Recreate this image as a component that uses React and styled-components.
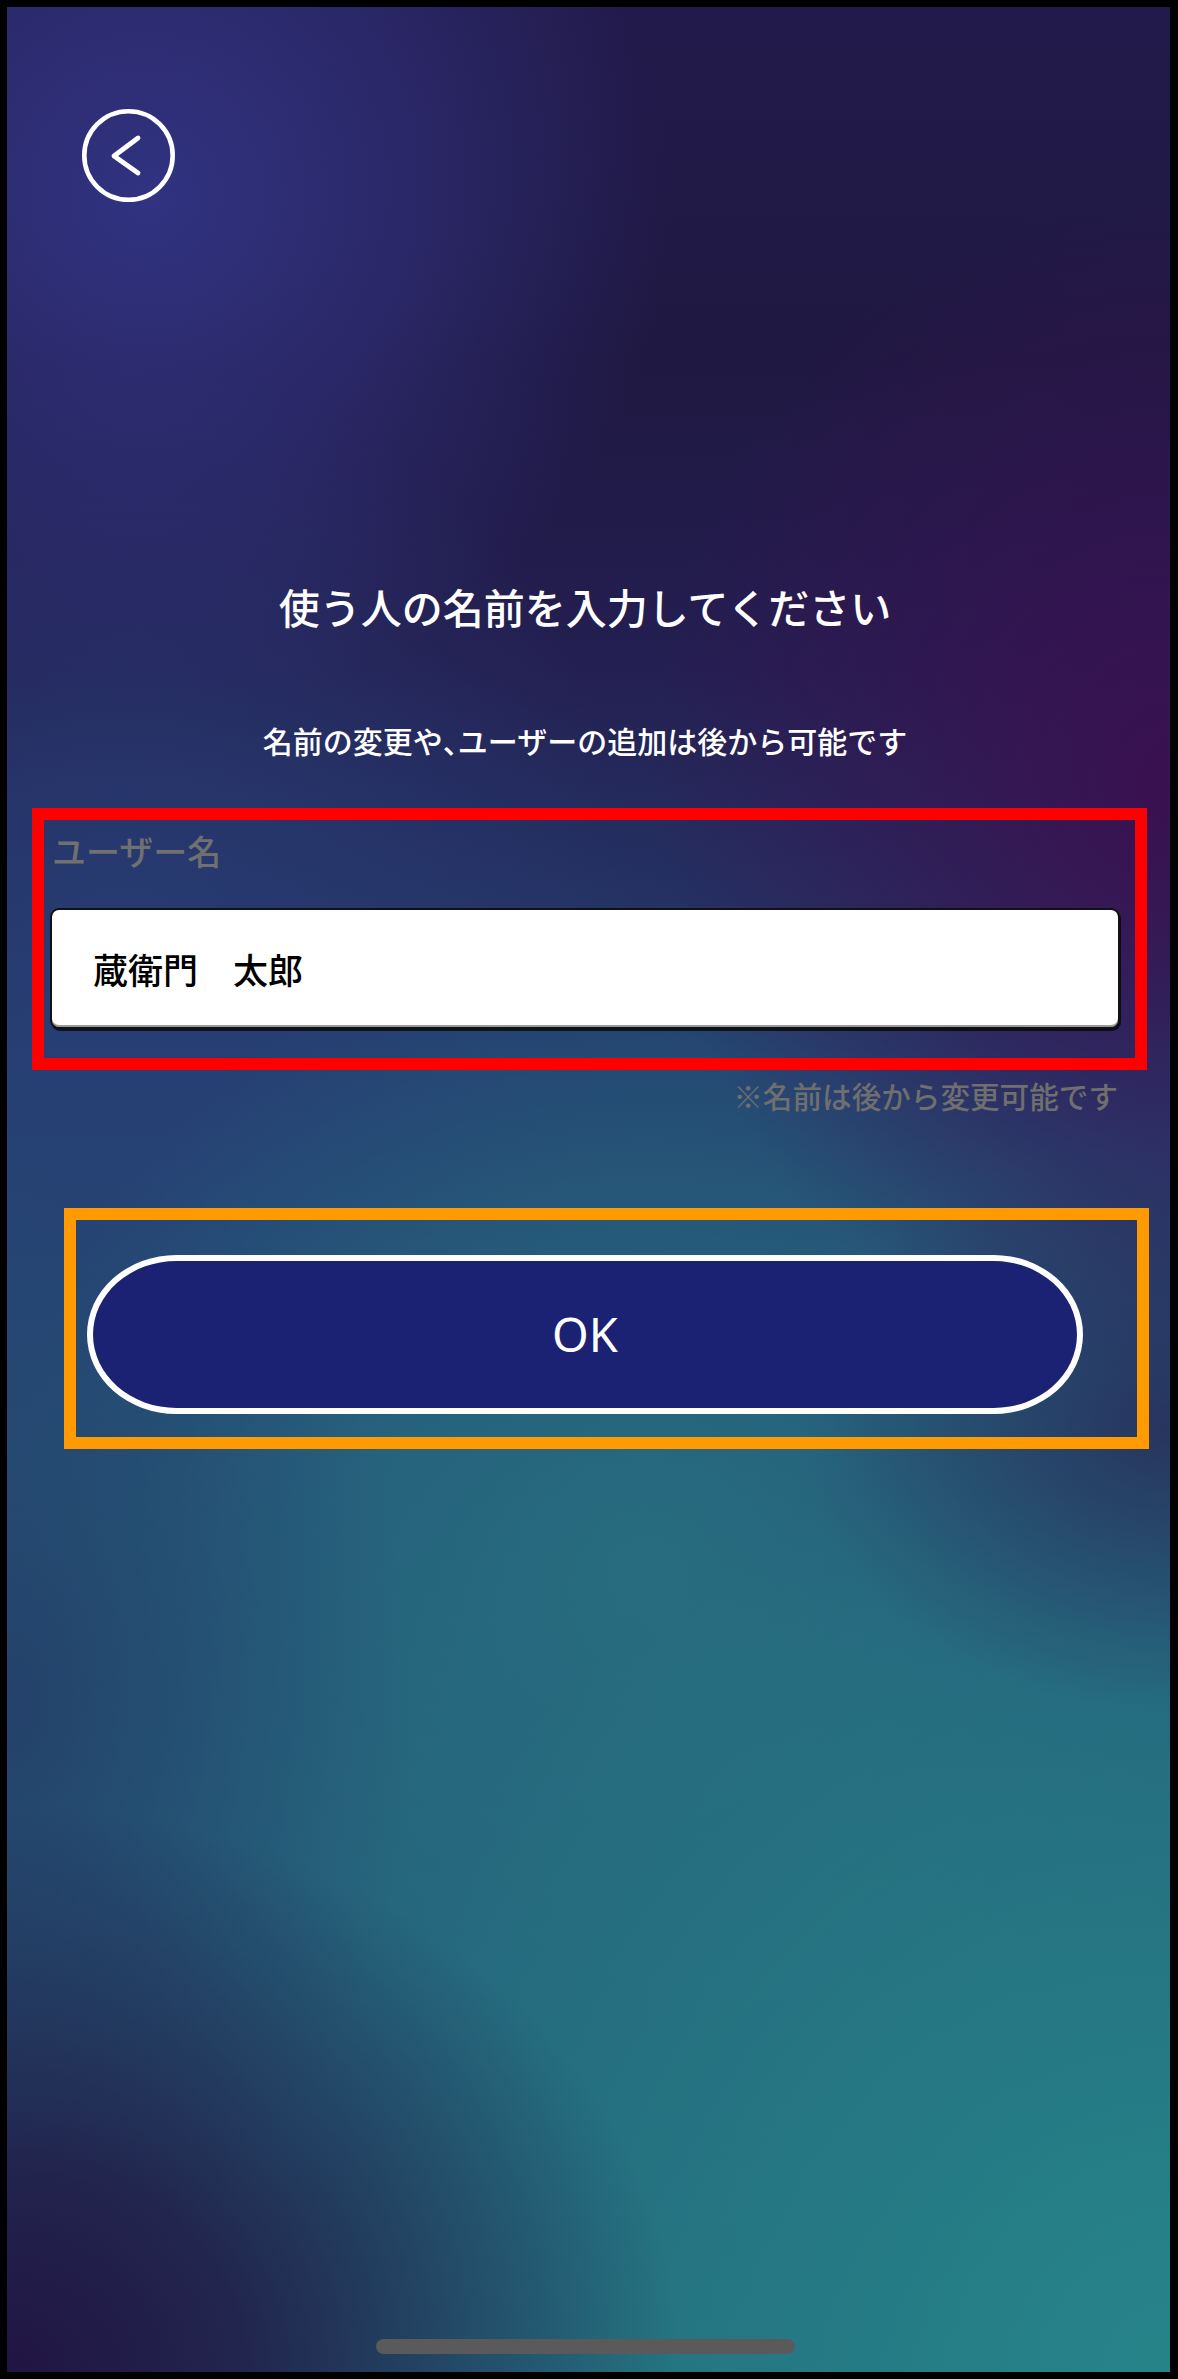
import React from "react";
import styled, { createGlobalStyle } from "styled-components";

const GlobalStyle = createGlobalStyle`
  html, body { margin: 0; padding: 0; background: #000; }
  * { box-sizing: border-box; }
  body { font-family: "Noto Sans CJK JP", "Noto Sans", sans-serif; }
`;

const Page = styled.div`
  width: 1178px;
  height: 2379px;
  border-style: solid;
  border-color: #000;
  border-width: 7px 8px 7px 7px;
  display: flex;
  flex-direction: column;
  padding: 0 50px 0 43px;
  overflow: hidden;
  background:
    radial-gradient(ellipse 45% 22% at 12% 8%, rgba(50, 52, 132, 0.95) 0%, rgba(50, 52, 132, 0.6) 45%, rgba(50, 52, 132, 0) 100%),
    radial-gradient(ellipse 45% 25% at 100% 33%, rgba(58, 16, 80, 1) 0%, rgba(58, 16, 80, 0.6) 40%, rgba(58, 16, 80, 0) 100%),
    radial-gradient(ellipse 32% 12% at 100% 60%, rgba(40, 40, 85, 0.75) 0%, rgba(40, 40, 85, 0) 100%),
    radial-gradient(ellipse 58% 24% at 0% 100%, rgba(33, 20, 66, 1) 0%, rgba(33, 20, 66, 0.8) 35%, rgba(33, 20, 66, 0) 100%),
    radial-gradient(ellipse 35% 25% at 0% 72%, rgba(36, 60, 104, 0.85) 0%, rgba(36, 60, 104, 0) 100%),
    radial-gradient(ellipse 75% 40% at 100% 100%, rgba(38, 132, 137, 1) 0%, rgba(38, 132, 137, 0) 100%),
    radial-gradient(ellipse 55% 28% at 55% 66%, rgba(39, 110, 127, 0.9) 0%, rgba(39, 110, 127, 0) 100%),
    radial-gradient(ellipse 45% 25% at 10% 40%, rgba(40, 62, 118, 0.8) 0%, rgba(40, 62, 118, 0) 100%),
    linear-gradient(to bottom, #221a4a 0%, #1f1842 15%, #241f52 28%, #244070 45%, #25567a 60%, #25627c 75%, #246b7e 100%);
`;

const Header = styled.div`
  padding-top: 102px;
  padding-left: 32px;
  display: flex;
`;

const BackButton = styled.button`
  width: 93px;
  height: 93px;
  padding: 0;
  border: none;
  background: transparent;
  display: flex;
  cursor: pointer;
`;

const Title = styled.h1`
  margin: 384px 0 0;
  font-size: 41px;
  line-height: 1;
  font-weight: 500;
  color: #fff;
  text-align: center;
`;

const Subtitle = styled.p`
  margin: 98px 0 0;
  font-size: 30px;
  line-height: 1;
  font-weight: 500;
  color: #fff;
  text-align: center;
`;

const NarrowPunct = styled.span`
  font-feature-settings: "halt" 1;
`;

const FieldGroup = styled.div`
  position: relative;
  margin-top: 79px;
  display: flex;
  flex-direction: column;
  gap: 40px;
`;

const Label = styled.label`
  font-size: 34px;
  line-height: 1;
  font-weight: 500;
  color: #707070;
  padding-left: 2px;
`;

const TextInput = styled.input`
  width: 100%;
  height: 121px;
  border: 2.5px solid #111;
  border-radius: 9px;
  background: #fff;
  box-shadow: inset 0 -2px 0 #9a9a9a, 1px 2px 0 rgba(0, 0, 0, 0.7);
  padding: 0 0 0 41px;
  font-family: "Noto Sans CJK JP", sans-serif;
  font-size: 35px;
  font-weight: 500;
  color: #000;
  outline: none;
`;

const Hint = styled.p`
  margin: 52px 2px 0 0;
  font-size: 29.6px;
  line-height: 1;
  font-weight: 500;
  color: #6f6f6f;
  text-align: right;
`;

const ButtonWrap = styled.div`
  position: relative;
  margin: 144px 37px 0;
`;

const OkButton = styled.button`
  width: 100%;
  height: 159px;
  border: 6px solid #fff;
  border-radius: 90px / 80px;
  background: #1b2273;
  color: #fff;
  font-family: "Noto Sans", sans-serif;
  font-size: 47px;
  font-weight: 400;
  display: flex;
  align-items: center;
  justify-content: center;
  cursor: pointer;
`;

const Annotation = styled.div`
  position: absolute;
  top: ${(p) => p.$top}px;
  left: ${(p) => p.$left}px;
  right: ${(p) => p.$right}px;
  bottom: ${(p) => p.$bottom}px;
  border: 12px solid ${(p) => p.$color};
  pointer-events: none;
`;

const HomeIndicator = styled.div`
  margin: auto auto 18px;
  width: 419px;
  height: 15px;
  border-radius: 8px;
  background: #5a5a5a;
`;

export default function App() {
  return (
    <>
      <GlobalStyle />
      <Page>
        <Header>
          <BackButton aria-label="戻る">
            <svg width="93" height="93" viewBox="0 0 93 93" fill="none">
              <circle cx="46.5" cy="46.5" r="44.2" stroke="#fff" strokeWidth="4.6" />
              <path
                d="M56 29 L32 47 L56 64"
                stroke="#fff"
                strokeWidth="4.8"
                strokeLinecap="round"
                strokeLinejoin="round"
              />
            </svg>
          </BackButton>
        </Header>
        <Title>使う人の名前を入力してください</Title>
        <Subtitle>
          名前の変更や<NarrowPunct>、</NarrowPunct>ユーザーの追加は後から可能です
        </Subtitle>
        <FieldGroup>
          <Label htmlFor="username">ユーザー名</Label>
          <TextInput id="username" readOnly defaultValue="蔵衛門　太郎" />
          <Annotation $color="#ff0000" $top={-26} $left={-18} $right={-27} $bottom={-41} />
        </FieldGroup>
        <Hint>※名前は後から変更可能です</Hint>
        <ButtonWrap>
          <OkButton>OK</OkButton>
          <Annotation $color="#ff9a00" $top={-47} $left={-23} $right={-66} $bottom={-35} />
        </ButtonWrap>
        <HomeIndicator />
      </Page>
    </>
  );
}
